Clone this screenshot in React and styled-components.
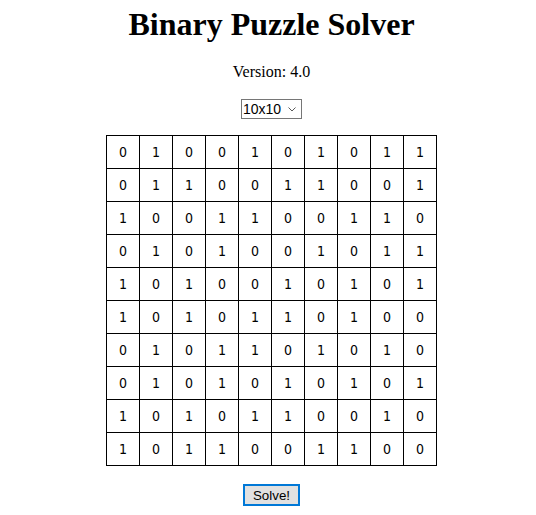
import React from "react";
import styled, { createGlobalStyle } from "styled-components";

const Global = createGlobalStyle`
  html, body { margin: 0; padding: 0; background: #fff; }
  body { font-family: "Liberation Serif", "Times New Roman", serif; color: #000; }
`;

const Page = styled.div`
  display: flex;
  flex-direction: column;
  align-items: center;
  padding-top: 6px;
  padding-left: 7px;
`;

const Title = styled.h1`
  margin: 0;
  font-size: 32px;
  line-height: 36px;
  font-weight: bold;
  font-family: "Liberation Serif", "Times New Roman", serif;
`;

const Version = styled.p`
  margin: 21px 0 0;
  font-size: 16px;
  line-height: 18px;
`;

const SelectWrap = styled.div`
  position: relative;
  margin-top: 18px;
  width: 61px;
  height: 20px;
`;

const SizeSelect = styled.select`
  appearance: none;
  -webkit-appearance: none;
  display: block;
  width: 61px;
  height: 20px;
  box-sizing: border-box;
  font-family: "Liberation Sans", Arial, sans-serif;
  font-size: 14px;
  border: 1px solid #767676;
  border-radius: 0;
  background: #fff;
  color: #000;
  padding: 0 0 0 1px;
  margin: 0;
`;

const Chevron = styled.svg`
  position: absolute;
  right: 6px;
  top: 8px;
  width: 8px;
  height: 5px;
  pointer-events: none;
`;

const Grid = styled.table`
  margin-top: 16px;
  border-collapse: collapse;
`;

const Cell = styled.td`
  width: 32px;
  height: 32px;
  padding: 0;
  border: 1px solid #000;
  text-align: center;
  vertical-align: middle;
  font-family: "DejaVu Sans Condensed", "DejaVu Sans", Tahoma, sans-serif;
  font-stretch: condensed;
  font-size: 14px;
  line-height: 32px;
`;

const SolveButton = styled.button`
  margin-top: 18px;
  width: 57px;
  height: 22px;
  box-sizing: border-box;
  border: 2px solid #0078d7;
  background: #e1e1e1;
  font-family: "Liberation Sans", Arial, sans-serif;
  font-size: 13.33px;
  color: #000;
  padding: 0;
`;

const rows = [
  "0100101011",
  "0110011001",
  "1001100110",
  "0101001011",
  "1010010101",
  "1010110100",
  "0101101010",
  "0101010101",
  "1010110010",
  "1011001100",
];

export default function App() {
  return (
    <Page>
      <Global />
      <Title>Binary Puzzle Solver</Title>
      <Version>Version: 4.0</Version>
      <SelectWrap>
        <SizeSelect defaultValue="10x10">
          <option value="6x6">6x6</option>
          <option value="8x8">8x8</option>
          <option value="10x10">10x10</option>
          <option value="12x12">12x12</option>
        </SizeSelect>
        <Chevron viewBox="0 0 8 5">
          <path d="M0.5 0.5 L4 4 L7.5 0.5" fill="none" stroke="#5a5a5a" strokeWidth="1" />
        </Chevron>
      </SelectWrap>
      <Grid>
        <tbody>
          {rows.map((r, i) => (
            <tr key={i}>
              {r.split("").map((c, j) => (
                <Cell key={j}>{c}</Cell>
              ))}
            </tr>
          ))}
        </tbody>
      </Grid>
      <SolveButton>Solve!</SolveButton>
    </Page>
  );
}
